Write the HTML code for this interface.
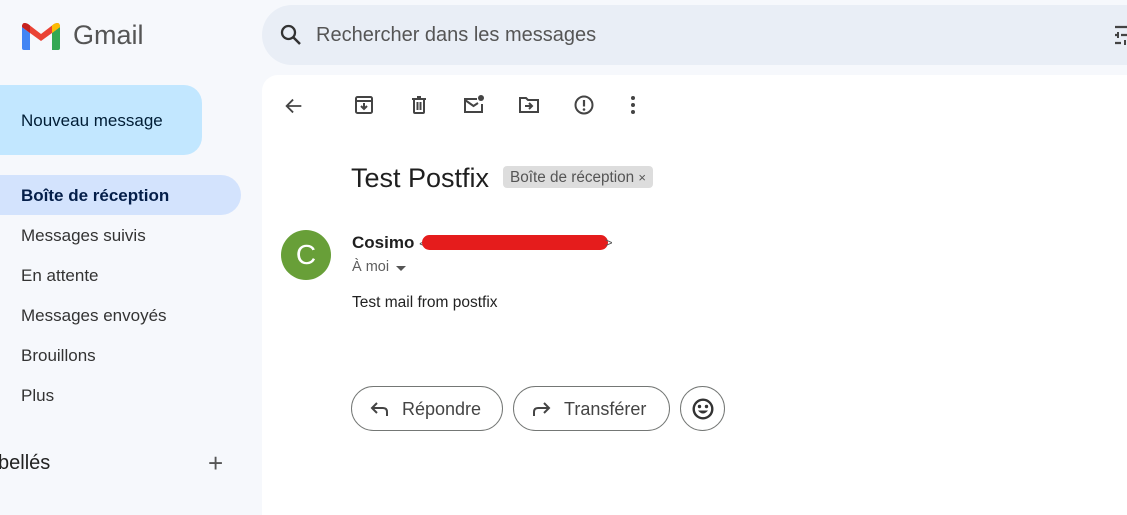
<!DOCTYPE html>
<html><head><meta charset="utf-8"><style>
*{margin:0;padding:0;box-sizing:border-box}
body{width:1127px;height:502px;overflow:hidden;background:#f6f8fc;font-family:"Liberation Sans",Arial,sans-serif;position:relative;color:#1f1f1f}
.abs{position:absolute}
.nav{left:0;font-size:17px;color:#333;height:40px;line-height:42px;padding-left:21px;width:241px}
.btn{position:absolute;top:386px;height:45px;border:1px solid #747775;border-radius:23px;font-size:18px;color:#444;line-height:44px}
</style></head><body>
<svg class="abs" style="left:22px;top:22px" width="38" height="28" viewBox="0 0 38 28">
<path d="M0 5 L0 26 Q0 28 2 28 L8 28 L8 11Z" fill="#4285f4"/>
<path d="M30 11 L30 28 L36 28 Q38 28 38 26 L38 5Z" fill="#34a853"/>
<path d="M0 5 Q0 -1 6 2 L19 12 L32 2 Q38 -1 38 5 L30 11 L19 19 L8 11Z" fill="#ea4335"/>
<path d="M30 11 L38 5 Q38 -1 32 2 L30 3.5Z" fill="#fbbc04"/>
<path d="M0 5 L8 11 L8 3.5 L6 2 Q0 -1 0 5Z" fill="#c5221f"/>
</svg>
<div class="abs" style="left:73px;top:20px;font-size:27px;color:#555">Gmail</div>
<div class="abs" style="left:262px;top:5px;width:900px;height:60px;border-radius:30px;background:#e9eef6"></div>
<svg class="abs" style="left:279px;top:23px" width="24" height="24" viewBox="0 0 24 24"><circle cx="9.5" cy="9.5" r="6.5" fill="none" stroke="#333" stroke-width="2.3"/><path d="M14.5 14.5L21 21" stroke="#333" stroke-width="2.5"/></svg>
<div class="abs" style="left:316px;top:24px;font-size:20px;color:#555">Rechercher dans les messages</div>
<svg class="abs" style="left:1113px;top:25px" width="14" height="20" viewBox="0 0 14 20"><path d="M2 2H14M2 10H5M8 10H14M2 18H8" stroke="#444" stroke-width="2.2"/><path d="M5 7V13M12 15V20" stroke="#444" stroke-width="2"/></svg>
<div class="abs" style="left:-20px;top:85px;width:222px;height:70px;border-radius:18px;background:#c2e7ff"></div>
<div class="abs" style="left:21px;top:111px;font-size:17px;color:#001d35">Nouveau message</div>
<div class="abs nav" style="top:175px;background:#d3e3fd;border-radius:0 20px 20px 0;font-weight:bold;color:#041e49">Boîte de réception</div>
<div class="abs nav" style="top:215px">Messages suivis</div>
<div class="abs nav" style="top:255px">En attente</div>
<div class="abs nav" style="top:295px">Messages envoyés</div>
<div class="abs nav" style="top:335px">Brouillons</div>
<div class="abs nav" style="top:375px">Plus</div>
<div class="abs" style="left:-2px;top:452px;font-size:20px;color:#222">bellés</div>
<div class="abs" style="left:208px;top:448px;font-size:26px;color:#555;font-weight:300">+</div>
<div class="abs" style="left:262px;top:75px;width:900px;height:440px;background:#fff;border-radius:16px 0 0 0"></div>
<svg class="abs" style="left:283px;top:95px" width="22" height="22" viewBox="0 0 24 24"><path d="M20 12H5M11 5L4 12L11 19" fill="none" stroke="#444" stroke-width="2"/></svg>
<svg class="abs" style="left:354px;top:95px" width="20" height="20" viewBox="0 0 20 20"><rect x="2" y="2" width="16" height="16" rx="1.5" fill="none" stroke="#444" stroke-width="2"/><path d="M2 6H18M10 8V14M7 11L10 14L13 11" fill="none" stroke="#444" stroke-width="2"/></svg>
<svg class="abs" style="left:409px;top:95px" width="20" height="20" viewBox="0 0 20 20"><path d="M3 4H17M8 2H12M5 4V17Q5 18 6 18H14Q15 18 15 17V4M8.5 7V15M11.5 7V15" fill="none" stroke="#444" stroke-width="2"/></svg>
<svg class="abs" style="left:463px;top:94px" width="22" height="22" viewBox="0 0 22 22"><path d="M14 5H2V18H19V10" fill="none" stroke="#444" stroke-width="2"/><path d="M2 6L10.5 12L15 9" fill="none" stroke="#444" stroke-width="2"/><circle cx="18" cy="4" r="3" fill="#444"/></svg>
<svg class="abs" style="left:518px;top:95px" width="22" height="20" viewBox="0 0 22 20"><path d="M2 3H8L10 5H20V17H2Z" fill="none" stroke="#444" stroke-width="2"/><path d="M7 11H14M11 8L14 11L11 14" fill="none" stroke="#444" stroke-width="2"/></svg>
<svg class="abs" style="left:573px;top:94px" width="22" height="22" viewBox="0 0 22 22"><circle cx="11" cy="11" r="8.5" fill="none" stroke="#444" stroke-width="2"/><path d="M11 6V12.5" stroke="#444" stroke-width="2.2"/><circle cx="11" cy="15.5" r="1.3" fill="#444"/></svg>
<svg class="abs" style="left:628px;top:95px" width="10" height="20" viewBox="0 0 10 20"><circle cx="5" cy="3" r="2" fill="#444"/><circle cx="5" cy="10" r="2" fill="#444"/><circle cx="5" cy="17" r="2" fill="#444"/></svg>
<div class="abs" style="left:351px;top:163px;font-size:27px;color:#1f1f1f">Test Postfix</div>
<div class="abs" style="left:503px;top:166px;height:22px;padding:0 7px;background:#ddd;border-radius:4px;font-size:15.3px;line-height:23px;color:#555">Boîte de réception <span style="font-size:13px">×</span></div>
<div class="abs" style="left:281px;top:230px;width:50px;height:50px;border-radius:50%;background:#689f38;color:#fff;font-size:28px;text-align:center;line-height:50px">C</div>
<div class="abs" style="left:352px;top:233px;font-size:17px;font-weight:bold;color:#1f1f1f">Cosimo <span style="font-weight:normal;font-size:13px;color:#555">&lt;</span></div>
<div class="abs" style="left:422px;top:235px;width:186px;height:15px;border-radius:8px;background:#e51c1c"></div>
<div class="abs" style="left:605px;top:235px;font-size:13px;color:#555">&gt;</div>
<div class="abs" style="left:352px;top:259px;font-size:14.5px;color:#5e5e5e">À moi</div>
<div class="abs" style="left:396px;top:266px;border:5px solid transparent;border-top:5px solid #555"></div>
<div class="abs" style="left:352px;top:294px;font-size:15.5px;color:#222">Test mail from postfix</div>
<div class="btn" style="left:351px;width:152px;padding-left:50px">Répondre</div>
<svg class="abs" style="left:370px;top:400px" width="20" height="18" viewBox="0 0 20 18"><path d="M17 16V12Q17 8 13 8H3M7 3L2 8L7 13" fill="none" stroke="#444" stroke-width="2"/></svg>
<div class="btn" style="left:513px;width:157px;padding-left:50px">Transférer</div>
<svg class="abs" style="left:531px;top:400px" width="20" height="18" viewBox="0 0 20 18"><path d="M3 16V12Q3 8 7 8H17M13 3L18 8L13 13" fill="none" stroke="#444" stroke-width="2"/></svg>
<div class="btn" style="left:680px;width:45px"></div>
<svg class="abs" style="left:691px;top:397px" width="24" height="24" viewBox="0 0 24 24"><circle cx="12" cy="12" r="9.3" fill="none" stroke="#333" stroke-width="2.4"/><circle cx="8.5" cy="9.5" r="1.7" fill="#333"/><circle cx="15.5" cy="9.5" r="1.7" fill="#333"/><path d="M7 13.5Q12 19.5 17 13.5Z" fill="#333"/></svg>
</body></html>
